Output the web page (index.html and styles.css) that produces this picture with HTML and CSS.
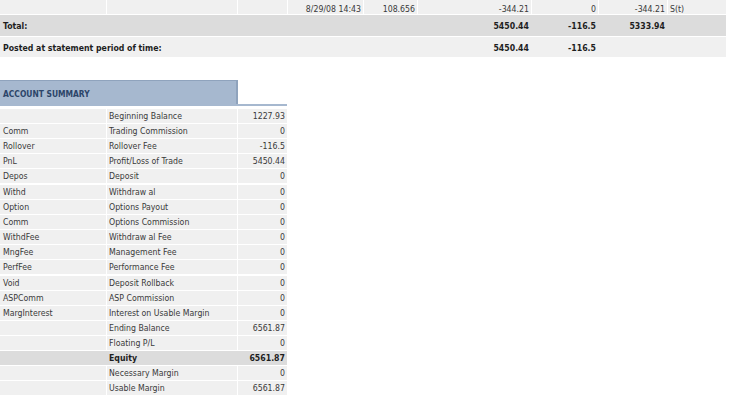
FILE: index.html
```html
<!DOCTYPE html>
<html>
<head>
<meta charset="utf-8">
<title>Statement</title>
<link rel="stylesheet" href="styles.css">
</head>
<body>
<div class="stmt">
  <div class="grid9 trade">
    <span class="c"></span><span class="c"></span><span class="c"></span>
    <span class="c">8/29/08 14:43</span>
    <span class="c">108.656</span>
    <span class="c">-344.21</span>
    <span class="c">0</span>
    <span class="c">-344.21</span>
    <span class="c l">S(t)</span>
  </div>
  <div class="grid9 total">
    <span class="lbl">Total:</span>
    <span class="num n6">5450.44</span>
    <span class="num">-116.5</span>
    <span class="num">5333.94</span>
  </div>
  <div class="grid9 posted">
    <span class="lbl">Posted at statement period of time:</span>
    <span class="num n6">5450.44</span>
    <span class="num">-116.5</span>
  </div>
</div>

<div class="summary">
  <div class="sum-head">ACCOUNT SUMMARY</div>
  <div class="sum-line"></div>
  <div class="sum-rows">
    <div class="srow"><span></span><span>Beginning Balance</span><span class="v">1227.93</span></div>
    <div class="srow"><span>Comm</span><span>Trading Commission</span><span class="v">0</span></div>
    <div class="srow"><span>Rollover</span><span>Rollover Fee</span><span class="v">-116.5</span></div>
    <div class="srow"><span>PnL</span><span>Profit/Loss of Trade</span><span class="v">5450.44</span></div>
    <div class="srow"><span>Depos</span><span>Deposit</span><span class="v">0</span></div>
    <div class="srow"><span>Withd</span><span>Withdraw al</span><span class="v">0</span></div>
    <div class="srow"><span>Option</span><span>Options Payout</span><span class="v">0</span></div>
    <div class="srow"><span>Comm</span><span>Options Commission</span><span class="v">0</span></div>
    <div class="srow"><span>WithdFee</span><span>Withdraw al Fee</span><span class="v">0</span></div>
    <div class="srow"><span>MngFee</span><span>Management Fee</span><span class="v">0</span></div>
    <div class="srow"><span>PerfFee</span><span>Performance Fee</span><span class="v">0</span></div>
    <div class="srow"><span>Void</span><span>Deposit Rollback</span><span class="v">0</span></div>
    <div class="srow"><span>ASPComm</span><span>ASP Commission</span><span class="v">0</span></div>
    <div class="srow"><span>MargInterest</span><span>Interest on Usable Margin</span><span class="v">0</span></div>
    <div class="srow"><span></span><span>Ending Balance</span><span class="v">6561.87</span></div>
    <div class="srow"><span></span><span>Floating P/L</span><span class="v">0</span></div>
    <div class="srow eq"><span></span><span>Equity</span><span class="v">6561.87</span></div>
    <div class="srow"><span></span><span>Necessary Margin</span><span class="v">0</span></div>
    <div class="srow"><span></span><span>Usable Margin</span><span class="v">6561.87</span></div>
  </div>
</div>
</body>
</html>
```

FILE: styles.css
```css
html, body {
  margin: 0;
  padding: 0;
  background: #ffffff;
}

body {
  font-family: "DejaVu Sans Condensed", "DejaVu Sans", sans-serif;
  font-stretch: condensed;
  font-size: 8.7px;
  color: #3a3a3a;
}

.stmt {
  display: flex;
  flex-direction: column;
  gap: 1px;
}

.grid9 {
  display: grid;
  grid-template-columns: 106px 130px 49px 75px 53px 113px 66px 68px 58px;
  column-gap: 1px;
  width: 726px;
}

.trade {
  height: 14px;
}

.trade .c {
  background: #f0f0f0;
  padding: 4px 2px 0 2px;
  line-height: 10px;
  text-align: right;
  white-space: nowrap;
}

.trade .c.l {
  text-align: left;
}

.total,
.posted {
  align-items: center;
  font-weight: bold;
  color: #1e1e1e;
}

.total {
  height: 21px;
  background: #dcdcdc;
}

.posted {
  height: 20px;
  background: #f0f0f0;
  padding-top: 1px;
  box-sizing: border-box;
}

.lbl {
  grid-column: 1 / 6;
  padding-left: 3px;
  white-space: nowrap;
}

.num {
  text-align: right;
  padding-right: 2px;
}

.n6 {
  grid-column: 6;
}

.summary {
  margin-top: 23px;
  width: 287px;
}

.sum-head {
  box-sizing: border-box;
  width: 238px;
  height: 24px;
  background: #a6b8cf;
  border-top: 1px solid #8fa3bd;
  border-right: 2px solid #8fa3bd;
  padding: 3px 0 0 3px;
  line-height: 20px;
  font-size: 8.4px;
  font-weight: bold;
  color: #2c4569;
}

.sum-line {
  height: 2px;
  background: #a6b8cf;
}

.sum-rows {
  display: flex;
  flex-direction: column;
  gap: 1px;
  margin-top: 3px;
}

.srow {
  display: grid;
  grid-template-columns: 106px 130px 49px;
  column-gap: 1px;
  height: 14px;
}

.srow:nth-child(6),
.srow:nth-child(12) {
  margin-top: 1px;
}

.srow > span {
  background: #f0f0f0;
  line-height: 15px;
  padding-left: 3px;
  white-space: nowrap;
  overflow: hidden;
}

.srow > span:nth-child(2) {
  padding-left: 2px;
}

.srow > .v {
  text-align: right;
  padding-left: 0;
  padding-right: 2px;
}

.srow.eq {
  background: #dcdcdc;
}

.srow.eq > span {
  background: transparent;
  font-weight: bold;
  color: #1e1e1e;
}
```
